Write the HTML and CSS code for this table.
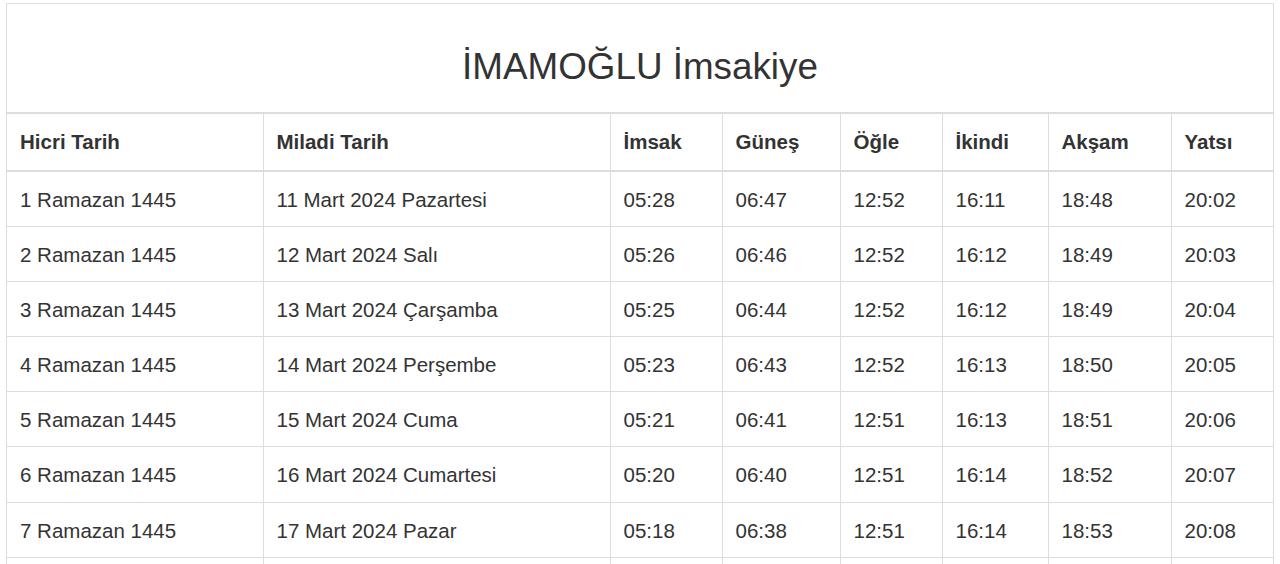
FILE: index.html
```html
<!DOCTYPE html>
<html lang="tr">
<head>
<meta charset="utf-8">
<title>İMAMOĞLU İmsakiye</title>
<link rel="stylesheet" href="styles.css">
</head>
<body>
<div class="sheet">
  <h1 class="title">İMAMOĞLU İmsakiye</h1>
  <table class="times">
    <colgroup>
      <col class="c-hicri"><col class="c-miladi"><col class="c-imsak"><col class="c-gunes"><col class="c-ogle"><col class="c-ikindi"><col class="c-aksam"><col class="c-yatsi">
    </colgroup>
    <thead>
      <tr><th>Hicri Tarih</th><th>Miladi Tarih</th><th>İmsak</th><th>Güneş</th><th>Öğle</th><th>İkindi</th><th>Akşam</th><th>Yatsı</th></tr>
    </thead>
    <tbody>
      <tr><td>1 Ramazan 1445</td><td>11 Mart 2024 Pazartesi</td><td>05:28</td><td>06:47</td><td>12:52</td><td>16:11</td><td>18:48</td><td>20:02</td></tr>
      <tr><td>2 Ramazan 1445</td><td>12 Mart 2024 Salı</td><td>05:26</td><td>06:46</td><td>12:52</td><td>16:12</td><td>18:49</td><td>20:03</td></tr>
      <tr><td>3 Ramazan 1445</td><td>13 Mart 2024 Çarşamba</td><td>05:25</td><td>06:44</td><td>12:52</td><td>16:12</td><td>18:49</td><td>20:04</td></tr>
      <tr><td>4 Ramazan 1445</td><td>14 Mart 2024 Perşembe</td><td>05:23</td><td>06:43</td><td>12:52</td><td>16:13</td><td>18:50</td><td>20:05</td></tr>
      <tr><td>5 Ramazan 1445</td><td>15 Mart 2024 Cuma</td><td>05:21</td><td>06:41</td><td>12:51</td><td>16:13</td><td>18:51</td><td>20:06</td></tr>
      <tr><td>6 Ramazan 1445</td><td>16 Mart 2024 Cumartesi</td><td>05:20</td><td>06:40</td><td>12:51</td><td>16:14</td><td>18:52</td><td>20:07</td></tr>
      <tr><td>7 Ramazan 1445</td><td>17 Mart 2024 Pazar</td><td>05:18</td><td>06:38</td><td>12:51</td><td>16:14</td><td>18:53</td><td>20:08</td></tr>
      <tr><td>8 Ramazan 1445</td><td>18 Mart 2024 Pazartesi</td><td>05:16</td><td>06:36</td><td>12:50</td><td>16:15</td><td>18:54</td><td>20:09</td></tr>
    </tbody>
  </table>
</div>
</body>
</html>
```
FILE: styles.css
```css
html, body {
  margin: 0;
  padding: 0;
  background: #fff;
}
body {
  padding: 3px 6px 0 6px;
  font-family: "Liberation Sans", Helvetica, Arial, sans-serif;
  color: #333;
}
.sheet {
  border: 1px solid #ddd;
  border-bottom: 0;
}
.title {
  margin: 0;
  height: 41px;
  padding: 42px 0 25px 0;
  line-height: 41px;
  font-size: 36.8px;
  font-weight: normal;
  text-align: center;
  color: #333;
  border-bottom: 2px solid #ddd;
}
.times {
  width: 100%;
  border-collapse: collapse;
  table-layout: fixed;
  font-size: 20.5px;
}
.c-hicri { width: 256px; }
.c-miladi { width: 347px; }
.c-imsak { width: 112px; }
.c-gunes { width: 118px; }
.c-ogle { width: 102px; }
.c-ikindi { width: 106px; }
.c-aksam { width: 123px; }
.c-yatsi { width: auto; }
.times th,
.times td {
  text-align: left;
  padding: 14px 13px 12.2px 13px;
  line-height: 28px;
  border-left: 1px solid #ddd;
  border-bottom: 1px solid #ddd;
  white-space: nowrap;
  overflow: hidden;
}
.times th:first-child,
.times td:first-child {
  border-left: 0;
}
.times th {
  font-weight: bold;
  padding-bottom: 13.5px;
  border-bottom: 2px solid #ddd;
}
```
